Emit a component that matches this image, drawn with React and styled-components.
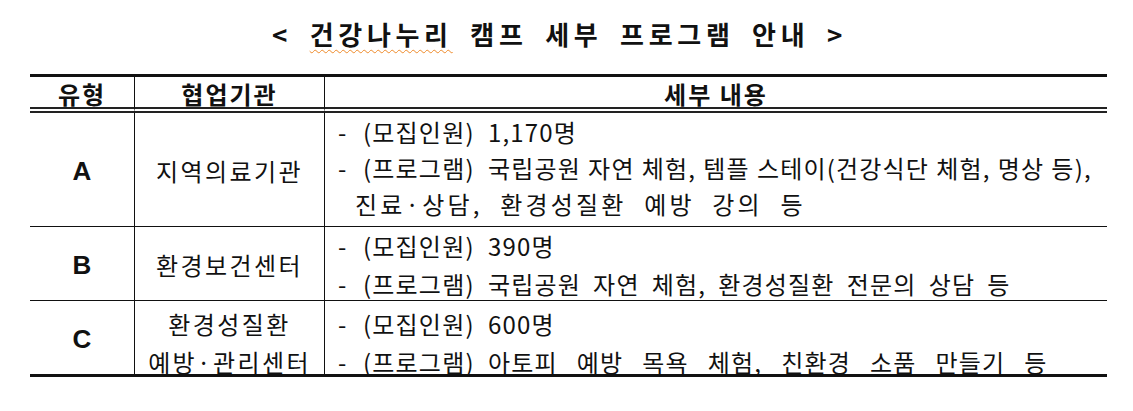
import React from "react";
import styled, { createGlobalStyle } from "styled-components";

const GlobalStyle = createGlobalStyle`
  html, body {
    margin: 0;
    padding: 0;
    background: #ffffff;
  }
  body {
    font-family: "Noto Sans CJK KR", "Noto Sans", sans-serif;
    color: #111111;
  }
`;

// 행마다 다른 줄 간격 / 윗여백, 줄마다 다른 낱말 간격(ws)과 글자 간격(ls)
const rows = [
  {
    type: "A",
    org: ["지역의료기관"],
    lh: 36,
    pad: 1,
    items: [
      { label: "(모집인원)", lines: [{ t: "1,170명", ws: 0 }] },
      {
        label: "(프로그램)",
        lines: [
          { t: "국립공원 자연 체험, 템플 스테이(건강식단 체험, 명상 등),", ws: 0.5 },
          { t: "진료·상담, 환경성질환 예방 강의 등", ws: 9, ls: 3.2 },
        ],
      },
    ],
  },
  {
    type: "B",
    org: ["환경보건센터"],
    lh: 38,
    pad: 0,
    items: [
      { label: "(모집인원)", lines: [{ t: "390명", ws: 0 }] },
      {
        label: "(프로그램)",
        lines: [{ t: "국립공원 자연 체험, 환경성질환 전문의 상담 등", ws: 5.5 }],
      },
    ],
  },
  {
    type: "C",
    org: ["환경성질환", "예방·관리센터"],
    lh: 38,
    pad: 4,
    last: true,
    items: [
      { label: "(모집인원)", lines: [{ t: "600명", ws: 0 }] },
      {
        label: "(프로그램)",
        lines: [{ t: "아토피 예방 목욕 체험, 친환경 소품 만들기 등", ws: 12.4 }],
      },
    ],
  },
];

const App = () => {
  return (
    <>
      <GlobalStyle />
      <Page>
        <Title>
          {"< "}
          <Squiggle>건강나누리</Squiggle>
          {" 캠프 세부 프로그램 안내 >"}
        </Title>
        <Table>
          <HeadCell>유형</HeadCell>
          <HeadCell>협업기관</HeadCell>
          <HeadCell $end>세부 내용</HeadCell>

          {rows.map((row) => (
            <React.Fragment key={row.type}>
              <TypeCell $last={row.last}>{row.type}</TypeCell>
              <OrgCell
                $last={row.last}
                $lh={row.lh}
                $pad={row.pad}
                $multi={row.org.length > 1}
              >
                {row.org.map((line) => (
                  <div key={line}>{line}</div>
                ))}
              </OrgCell>
              <DetailCell $last={row.last} $lh={row.lh} $pad={row.pad}>
                {row.items.map((item, i) => (
                  <Item key={i}>
                    <Dash>-</Dash>
                    {item.label + "  "}
                    {item.lines.map((line, j) => (
                      <React.Fragment key={j}>
                        {j > 0 && <br />}
                        <Words $ws={line.ws} $ls={line.ls}>
                          {line.t}
                        </Words>
                      </React.Fragment>
                    ))}
                  </Item>
                ))}
              </DetailCell>
            </React.Fragment>
          ))}
        </Table>
      </Page>
    </>
  );
};

const Page = styled.div`
  width: 1133px;
  height: 411px;
  box-sizing: border-box;
  padding: 13px 26px 0 30px;
  display: flex;
  flex-direction: column;
  align-items: center;
`;

const Title = styled.h1`
  margin: 0 0 20px 0;
  height: 41px;
  line-height: 41px;
  font-size: 26px;
  font-weight: 700;
  letter-spacing: 4.7px;
  word-spacing: 7px;
  white-space: pre;
  color: #111;
  transform: translateX(-9px);
`;

const Squiggle = styled.span`
  text-decoration: underline wavy #ee8a2a;
  text-decoration-thickness: 1px;
  text-underline-offset: 4px;
`;

const Table = styled.div`
  width: 1077px;
  display: grid;
  grid-template-columns: 105px 190px 782px;
  grid-template-rows: 36px 114px 74px 76px;
  border-top: 3px solid #111;
`;

const cellBorder = `
  box-sizing: border-box;
  border-right: 1px solid #111;
`;

const HeadCell = styled.div`
  ${cellBorder}
  border-right: ${(p) => (p.$end ? "none" : "1px solid #111")};
  border-bottom: 6px double #222;
  display: flex;
  align-items: center;
  justify-content: center;
  padding-top: 3px;
  font-size: 24px;
  font-weight: 700;
  letter-spacing: 2px;
`;

const TypeCell = styled.div`
  ${cellBorder}
  border-bottom: ${(p) => (p.$last ? "3px" : "1px")} solid #111;
  display: flex;
  align-items: center;
  justify-content: center;
  padding-top: 4px;
  font-family: "Liberation Sans", Arial, sans-serif;
  font-size: 26px;
  font-weight: 700;
`;

const OrgCell = styled.div`
  ${cellBorder}
  border-bottom: ${(p) => (p.$last ? "3px" : "1px")} solid #111;
  display: flex;
  flex-direction: column;
  align-items: center;
  justify-content: ${(p) => (p.$multi ? "flex-start" : "center")};
  padding-top: ${(p) => (p.$multi ? p.$pad : 2)}px;
  font-size: 24px;
  letter-spacing: 2.4px;
  line-height: ${(p) => p.$lh}px;
  white-space: nowrap;
`;

const DetailCell = styled.div`
  box-sizing: border-box;
  border-bottom: ${(p) => (p.$last ? "3px" : "1px")} solid #111;
  padding: ${(p) => p.$pad}px 0 0 13px;
  font-size: 24px;
  letter-spacing: 1.2px;
  line-height: ${(p) => p.$lh}px;
  white-space: pre;
`;

const Item = styled.div`
  padding-left: 17px;
  text-indent: -17px;
`;

const Dash = styled.span`
  display: inline-block;
  width: 25px;
  text-indent: 0;
`;

const Words = styled.span`
  word-spacing: ${(p) => p.$ws}px;
  letter-spacing: ${(p) => (p.$ls != null ? `${p.$ls}px` : "inherit")};
`;

export default App;
